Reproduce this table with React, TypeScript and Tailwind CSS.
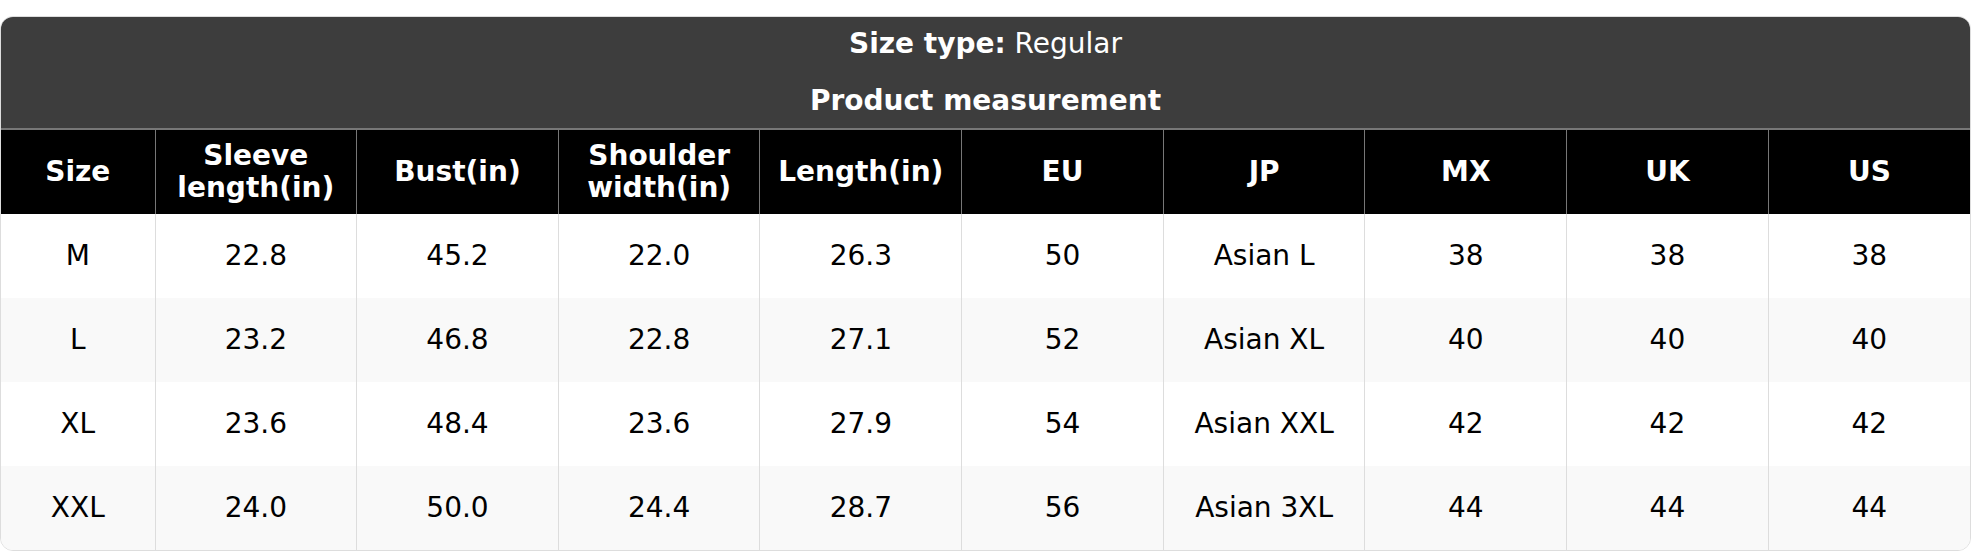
const columns = [
  ["Size"],
  ["Sleeve", "length(in)"],
  ["Bust(in)"],
  ["Shoulder", "width(in)"],
  ["Length(in)"],
  ["EU"],
  ["JP"],
  ["MX"],
  ["UK"],
  ["US"],
];

const rows = [
  ["M", "22.8", "45.2", "22.0", "26.3", "50", "Asian L", "38", "38", "38"],
  ["L", "23.2", "46.8", "22.8", "27.1", "52", "Asian XL", "40", "40", "40"],
  ["XL", "23.6", "48.4", "23.6", "27.9", "54", "Asian XXL", "42", "42", "42"],
  ["XXL", "24.0", "50.0", "24.4", "28.7", "56", "Asian 3XL", "44", "44", "44"],
];

export default function App() {
  return (
    <div className="bg-white pt-4 font-['DejaVu_Sans',sans-serif] text-[28px] leading-[32px]">
      <div className="w-[1971px] overflow-hidden rounded-[13px] border border-[#dddddd]">
        {/* title */}
        <div className="bg-[#3d3d3d] pt-[11px] pb-[11px] text-center text-white">
          <p>
            <span className="font-bold">Size type:</span> Regular
          </p>
          <p className="mt-[25px] font-bold">Product measurement</p>
        </div>

        <table className="w-full table-fixed border-collapse">
          <colgroup>
            <col className="w-[154px]" />
            {columns.slice(1).map((_, i) => (
              <col key={i} />
            ))}
          </colgroup>
          <thead>
            <tr className="h-[85px] bg-black text-white">
              {columns.map((lines, i) => (
                <th
                  key={i}
                  className="border-x border-t-2 border-[#777777] px-2 py-0 text-center font-bold first:border-l-0 last:border-r-0"
                >
                  {lines.map((l, j) => (
                    <div key={j}>{l}</div>
                  ))}
                </th>
              ))}
            </tr>
          </thead>
          <tbody>
            {rows.map((row, r) => (
              <tr
                key={r}
                className={r % 2 === 1 ? "h-[84px] bg-[#f9f9f9]" : "h-[84px] bg-white"}
              >
                {row.map((cell, c) => (
                  <td
                    key={c}
                    className="border-x border-[#dddddd] px-2 text-center text-black first:border-l-0 last:border-r-0"
                  >
                    {cell}
                  </td>
                ))}
              </tr>
            ))}
          </tbody>
        </table>
      </div>
    </div>
  );
}
